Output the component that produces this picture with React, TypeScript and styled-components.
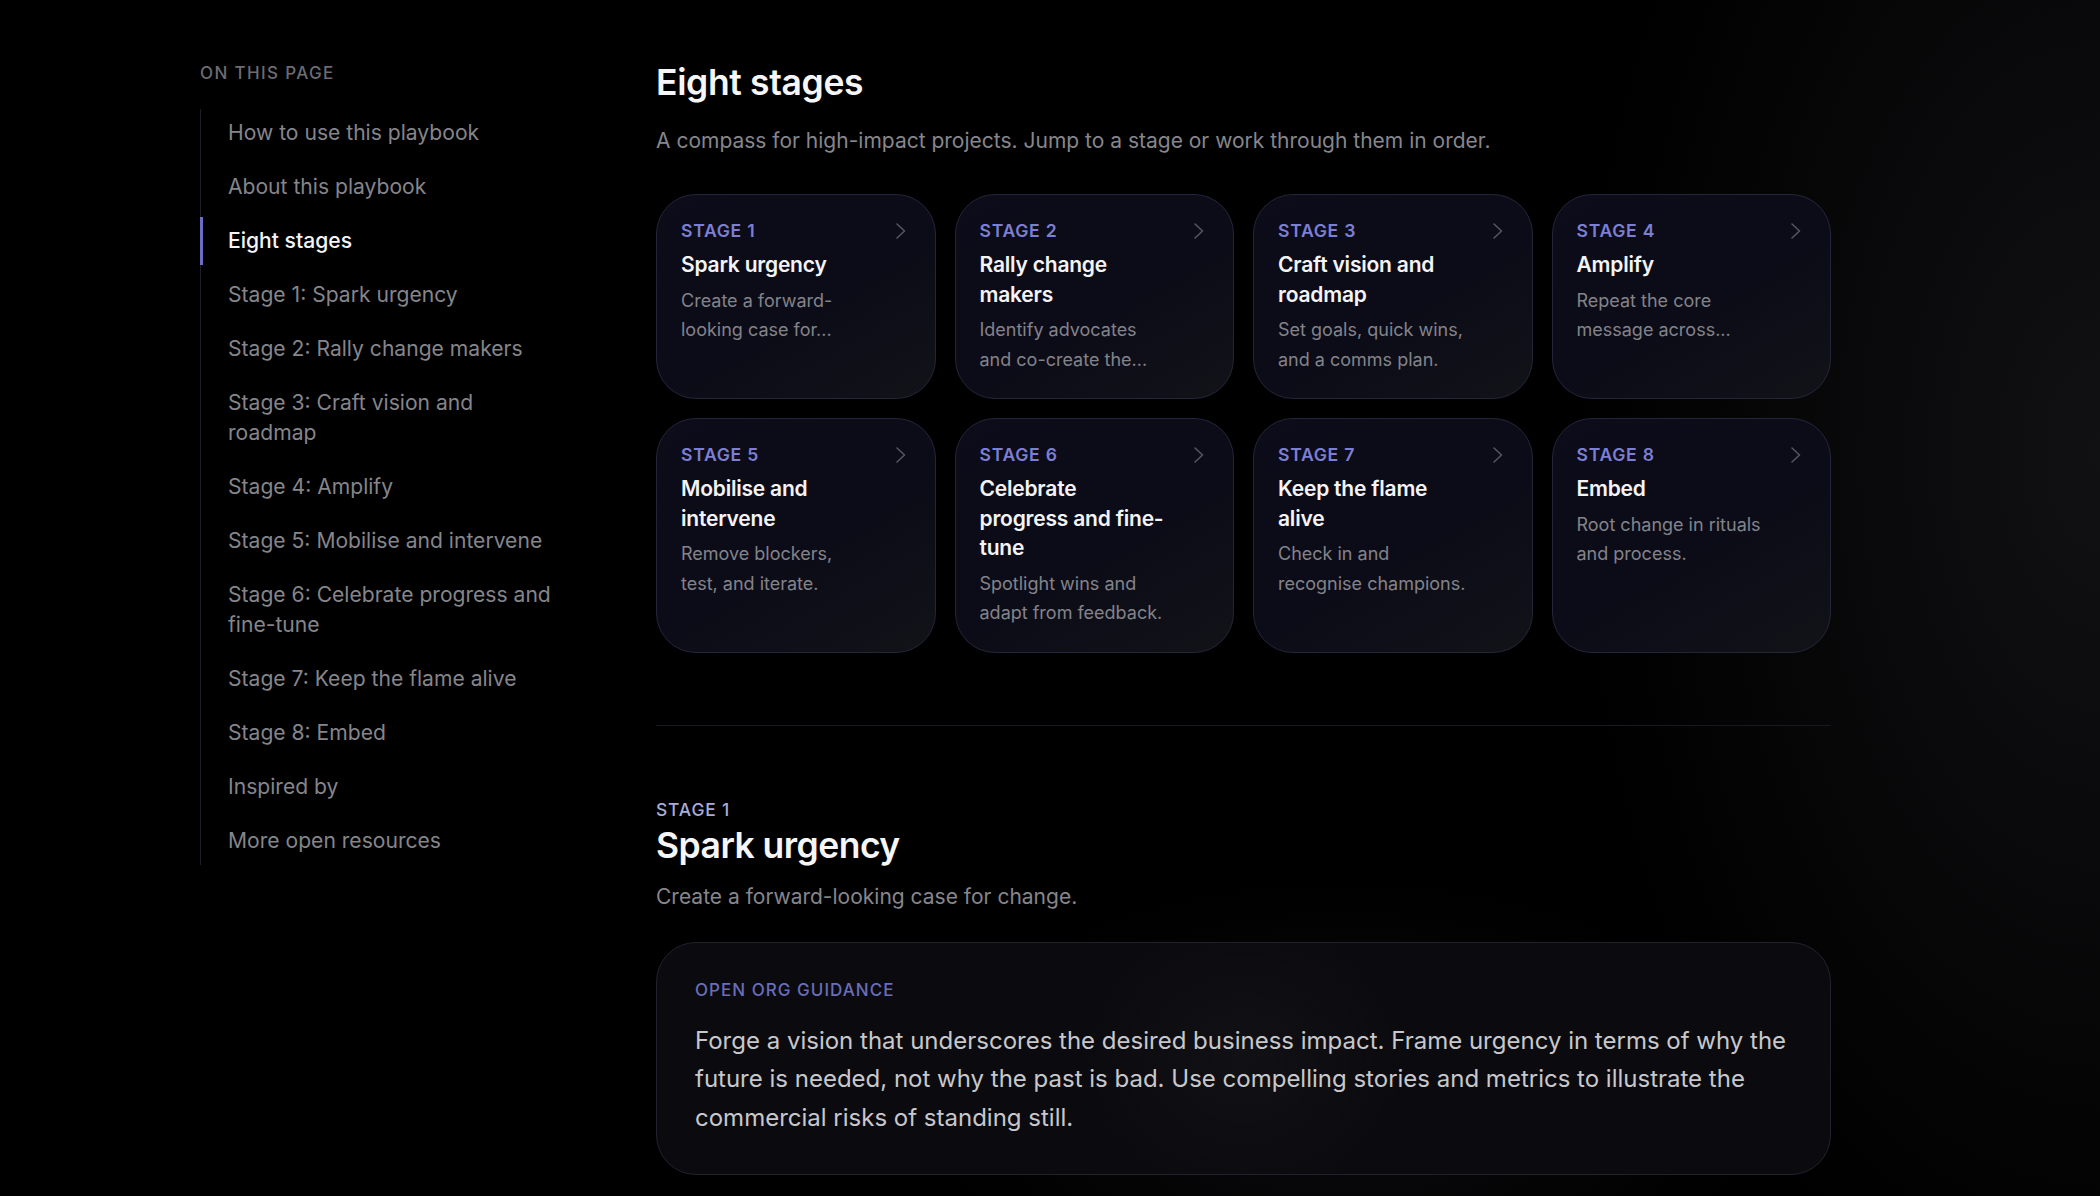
import React from "react";
import styled, { createGlobalStyle } from "styled-components";

const GlobalStyle = createGlobalStyle`
  html, body {
    margin: 0;
    padding: 0;
    background: #000000;
  }
  body {
    min-height: 100vh;
    font-family: Inter, "Noto Sans", "Liberation Sans", sans-serif;
    color: #f4f4f6;
    background:
      radial-gradient(ellipse 520px 900px at 100% 38%, #111114 0%, rgba(0, 0, 0, 0) 100%),
      radial-gradient(ellipse 420px 220px at 64% 92%, #0b0b0e 0%, rgba(0, 0, 0, 0) 100%),
      #000000;
    -webkit-font-smoothing: antialiased;
  }
  * {
    box-sizing: border-box;
  }
`;

const Page = styled.div`
  display: flex;
  align-items: flex-start;
  gap: 100px;
  padding: 61px 0 0 200px;
  height: 1196px;
  overflow: hidden;
`;

const Sidebar = styled.aside`
  width: 356px;
  flex-shrink: 0;
`;

const SidebarLabel = styled.div`
  font-size: 17px;
  line-height: 24px;
  font-weight: 500;
  letter-spacing: 0.08em;
  text-transform: uppercase;
  color: #6c6c72;
`;

const NavList = styled.nav`
  display: flex;
  flex-direction: column;
  gap: 6px;
  margin-top: 24px;
  border-left: 1px solid #1d1d2b;
`;

const NavItem = styled.a<{ active?: boolean }>`
  display: block;
  margin-left: -1px;
  padding: 9px 0 9px 25px;
  border-left: 3px solid ${(props) => (props.active ? "#6a6dc2" : "transparent")};
  font-size: 21.1px;
  line-height: 30px;
  font-weight: ${(props) => (props.active ? 500 : 400)};
  color: ${(props) => (props.active ? "#f5f5f7" : "#85858b")};
  text-decoration: none;
  cursor: pointer;
`;

const Main = styled.main`
  width: 1175px;
  flex-shrink: 0;
`;

const Title = styled.h1`
  margin: 0;
  font-size: 35.5px;
  line-height: 44px;
  font-weight: 600;
  letter-spacing: -0.01em;
  color: #f6f6f8;
`;

const Lead = styled.p<{ gap?: string }>`
  margin: ${(props) => props.gap || "20px"} 0 0;
  font-size: 21px;
  line-height: 32px;
  color: #86868c;
`;

const StageGrid = styled.div`
  display: grid;
  grid-template-columns: repeat(4, 1fr);
  gap: 19px;
  margin-top: 37px;
`;

const Card = styled.a`
  display: grid;
  grid-template-columns: 1fr 21px;
  column-gap: 19px;
  align-items: start;
  padding: 24px;
  border: 1px solid #25253a;
  border-radius: 40px;
  background: linear-gradient(150deg, #0c0c1a 0%, #0c0c18 55%, #121218 100%);
  text-decoration: none;
  cursor: pointer;
`;

const CardBody = styled.div`
  display: flex;
  flex-direction: column;
`;

const StageTag = styled.span`
  font-size: 17.6px;
  line-height: 24px;
  font-weight: 600;
  letter-spacing: 0.04em;
  color: #7c7fd3;
`;

const CardTitle = styled.span`
  margin-top: 7px;
  font-size: 21px;
  line-height: 29.5px;
  font-weight: 600;
  letter-spacing: -0.01em;
  color: #f4f4f6;
`;

const CardText = styled.span`
  margin-top: 6px;
  font-size: 18px;
  line-height: 29.5px;
  color: #83838a;
`;

const Chevron = styled.svg`
  width: 21px;
  height: 24px;
  color: #55555f;
`;

const Divider = styled.hr`
  margin: 72px 0 0;
  border: 0;
  border-top: 1px solid #18181e;
`;

const Section = styled.section`
  margin-top: 72px;
  display: flex;
  flex-direction: column;
`;

const Eyebrow = styled.span`
  font-size: 17.4px;
  line-height: 24px;
  font-weight: 500;
  letter-spacing: 0.05em;
  color: #a9abd8;
`;

const SectionTitle = styled.h2`
  margin: 2px 0 0;
  font-size: 35.5px;
  line-height: 44px;
  font-weight: 600;
  letter-spacing: -0.015em;
  color: #f6f6f8;
`;

const Guidance = styled.div`
  margin-top: 29px;
  padding: 35px 38px 36px;
  border: 1px solid #22222f;
  border-radius: 40px;
  background:
    radial-gradient(ellipse 160px 140px at 50% 50%, #111115 0%, rgba(0, 0, 0, 0) 100%),
    #0b0b0f;
`;

const GuidanceLabel = styled.div`
  font-size: 17px;
  line-height: 24px;
  font-weight: 500;
  letter-spacing: 0.06em;
  color: #6a6db8;
`;

const GuidanceText = styled.p`
  margin: 20px 0 0;
  font-size: 24px;
  line-height: 38.8px;
  color: #c8c8cc;
`;

const navItems = [
  "How to use this playbook",
  "About this playbook",
  "Eight stages",
  "Stage 1: Spark urgency",
  "Stage 2: Rally change makers",
  "Stage 3: Craft vision and roadmap",
  "Stage 4: Amplify",
  "Stage 5: Mobilise and intervene",
  "Stage 6: Celebrate progress and fine-tune",
  "Stage 7: Keep the flame alive",
  "Stage 8: Embed",
  "Inspired by",
  "More open resources",
];

// card summaries are pre-trimmed to two lines
const stages = [
  { title: "Spark urgency", text: "Create a forward-looking case for..." },
  { title: "Rally change makers", text: "Identify advocates and co-create the..." },
  { title: "Craft vision and roadmap", text: "Set goals, quick wins, and a comms plan." },
  { title: "Amplify", text: "Repeat the core message across..." },
  { title: "Mobilise and intervene", text: "Remove blockers, test, and iterate." },
  { title: "Celebrate progress and fine-tune", text: "Spotlight wins and adapt from feedback." },
  { title: "Keep the flame alive", text: "Check in and recognise champions." },
  { title: "Embed", text: "Root change in rituals and process." },
];

const ChevronIcon = () => (
  <Chevron viewBox="0 0 21 24" fill="none">
    <polyline
      points="7,5 14.5,12 7,19"
      stroke="currentColor"
      strokeWidth="1.6"
      strokeLinecap="round"
      strokeLinejoin="round"
    />
  </Chevron>
);

const App = () => {
  return (
    <>
      <GlobalStyle />
      <Page>
        <Sidebar>
          <SidebarLabel>On this page</SidebarLabel>
          <NavList>
            {navItems.map((item) => (
              <NavItem key={item} active={item === "Eight stages"}>
                {item}
              </NavItem>
            ))}
          </NavList>
        </Sidebar>

        <Main>
          <Title>Eight stages</Title>
          <Lead>
            A compass for high-impact projects. Jump to a stage or work through them in order.
          </Lead>

          <StageGrid>
            {stages.map((stage, i) => (
              <Card key={stage.title}>
                <CardBody>
                  <StageTag>STAGE {i + 1}</StageTag>
                  <CardTitle>{stage.title}</CardTitle>
                  <CardText>{stage.text}</CardText>
                </CardBody>
                <ChevronIcon />
              </Card>
            ))}
          </StageGrid>

          <Divider />

          <Section>
            <Eyebrow>STAGE 1</Eyebrow>
            <SectionTitle>Spark urgency</SectionTitle>
            <Lead gap="13px">Create a forward-looking case for change.</Lead>
            <Guidance>
              <GuidanceLabel>OPEN ORG GUIDANCE</GuidanceLabel>
              <GuidanceText>
                Forge a vision that underscores the desired business impact. Frame urgency in
                terms of why the future is needed, not why the past is bad. Use compelling
                stories and metrics to illustrate the commercial risks of standing still.
              </GuidanceText>
            </Guidance>
          </Section>
        </Main>
      </Page>
    </>
  );
};

export default App;
